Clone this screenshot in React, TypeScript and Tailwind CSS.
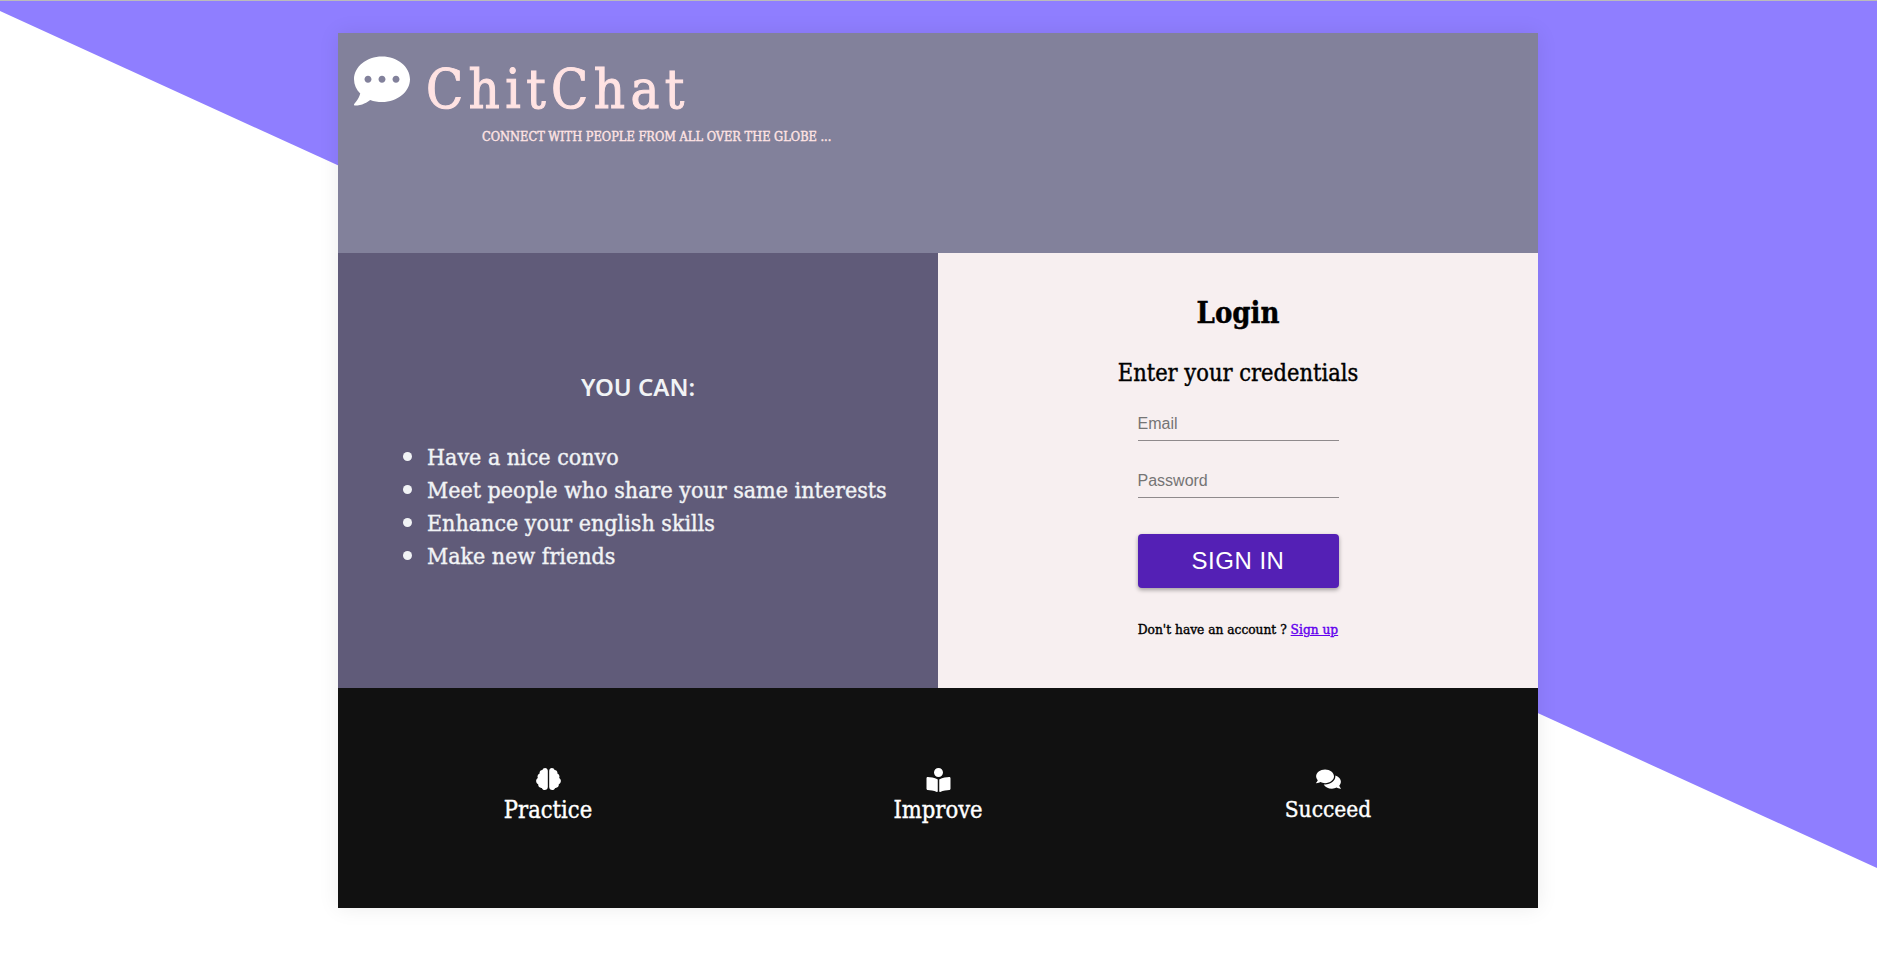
import { FaBookReader, FaBrain, FaCommentDots, FaComments } from "react-icons/fa";

const serif = "font-['DejaVu_Serif_Condensed','DejaVu_Serif',serif] [-webkit-text-stroke:0.4px]";

const perks = [
  "Have a nice convo",
  "Meet people who share your same interests",
  "Enhance your english skills",
  "Make new friends",
];

const App = () => {
  return (
    <div className="relative h-screen w-full overflow-hidden bg-white">
      <div className="absolute inset-0 border-t border-[#bbbbbb] bg-[#8f7eff] [clip-path:polygon(0_0,100%_0,100%_868px,0_11px)]"></div>
      <main className={`relative ml-[338px] flex w-[1200px] flex-col pt-[33px] ${serif}`}>
        <div className="flex flex-col shadow-[0_0_20px_rgba(0,0,0,0.08)]">
          <header className="h-[220px] bg-[#82819b] pl-4 pt-5">
            <div className="flex items-start">
              <FaCommentDots className="h-[56px] w-[56px] text-white" />
              <h1 className="ml-4 mt-[7px] text-[54px] leading-[60px] tracking-[5.4px] text-[#ffe3e3] [-webkit-text-stroke:1px]">ChitChat</h1>
            </div>
            <p className="ml-[128px] mt-[8px] text-[12.7px] leading-[18px] text-[#ffe3e3]">
              CONNECT WITH PEOPLE FROM ALL OVER THE GLOBE ...
            </p>
          </header>
          <div className="grid h-[435px] grid-cols-2">
            <section className="flex flex-col bg-[#605b79] pl-[67px] pt-[116px] text-[#f1f3f5]">
              <h3 className="pr-[67px] text-center font-['Noto_Sans',sans-serif] text-[24px] font-semibold leading-[36px] [-webkit-text-stroke:0px]">YOU CAN:</h3>
              <ul className="mt-[34px] list-disc pl-[22px] text-[23px] leading-[33px] marker:text-[28px]">
                {perks.map((perk) => (
                  <li key={perk} className="h-[33px]">{perk}</li>
                ))}
              </ul>
            </section>
            <section className="flex flex-col items-center bg-[#f7eff0] pt-[36px] text-black">
              <h2 className="text-[29px] font-bold leading-[48px]">Login</h2>
              <h3 className="mt-[18px] text-[23.4px] leading-[36px]">Enter your credentials</h3>
              <form className="mt-[15px] flex w-[201px] flex-col font-['Liberation_Sans',sans-serif] [-webkit-text-stroke:0px]">
                <input
                  placeholder="Email"
                  className="h-[35px] border-b border-[#8f8a8c] pt-[2px] text-[16px] outline-none placeholder:text-[#757575]"
                />
                <input
                  placeholder="Password"
                  className="mt-[22px] h-[35px] border-b border-[#8f8a8c] pt-[2px] text-[16px] outline-none placeholder:text-[#757575]"
                />
                <button
                  type="button"
                  className="mt-[36px] h-[54px] rounded-[4px] bg-[#5420b5] text-[24px] tracking-[0.5px] text-white shadow-[0_2px_4px_rgba(0,0,0,0.35)]"
                >
                  SIGN IN
                </button>
              </form>
              <p className="mt-[31px] whitespace-nowrap text-[13.6px] leading-[20px]">
                Don't have an account ?{" "}
                <a href="#signup" className="text-[#6200ee] underline">Sign up</a>
              </p>
            </section>
          </div>
          <footer className="grid h-[220px] grid-cols-[390px_390px_390px] justify-center bg-[#111111] pt-[80px] text-white">
            <div className="flex flex-col items-center">
              <FaBrain className="h-[22px] w-[25px]" />
              <span className="text-[23.5px] leading-[41px]">Practice</span>
            </div>
            <div className="flex flex-col items-center">
              <FaBookReader className="h-[24px] w-[25px]" />
              <span className="text-[23.5px] leading-[36px]">Improve</span>
            </div>
            <div className="flex flex-col items-center">
              <FaComments className="h-[22px] w-[25px]" />
              <span className="text-[22.5px] leading-[38px]">Succeed</span>
            </div>
          </footer>
        </div>
      </main>
    </div>
  );
};

export default App;
